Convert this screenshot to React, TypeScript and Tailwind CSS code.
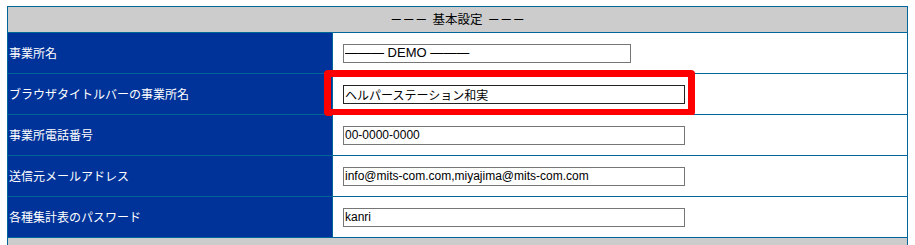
import React from "react";

const rows: { label: string; value: string; w: string; dark?: boolean; mark?: boolean; big?: boolean }[] = [
  { label: "事業所名", value: "――― DEMO ―――", w: "w-[288px]", big: true },
  { label: "ブラウザタイトルバーの事業所名", value: "ヘルパーステーション和実", w: "w-[342px]", dark: true, mark: true },
  { label: "事業所電話番号", value: "00-0000-0000", w: "w-[342px]" },
  { label: "送信元メールアドレス", value: "info@mits-com.com,miyajima@mits-com.com", w: "w-[342px]" },
  { label: "各種集計表のパスワード", value: "kanri", w: "w-[342px]" },
];

export default function App() {
  return (
    <div className="w-[915px] h-[245px] overflow-hidden bg-white pt-[6px] pl-[7px]">
      <div className="w-[901px] border border-[#006699] border-b-0">
        <div className="h-[26px] bg-[#cccccc] border-b border-[#006699] flex items-center justify-center gap-[5px] text-[12.5px] text-black font-['Noto_Sans_CJK_JP',sans-serif]">
          <span>－－－</span>
          <span>基本設定</span>
          <span>－－－</span>
        </div>
        {rows.map((r) => (
          <div key={r.label} className="flex h-[41px] border-b border-[#006699]">
            <div className="w-[324px] bg-[#003399] flex items-center pl-px text-white text-[12px] font-['Noto_Sans_CJK_JP',sans-serif]">
              {r.label}
            </div>
            <div className="relative flex-1 border-l border-[#006699] bg-white flex items-center pl-[10px]">
              <input
                readOnly
                defaultValue={r.value}
                className={`${r.w} h-[19px] border ${r.dark ? "border-[#222222]" : "border-[#767676]"} px-px ${r.big ? "text-[13px]" : "text-[12px]"} text-black outline-none font-['Liberation_Sans','Noto_Sans_CJK_JP',sans-serif]`}
              />
              {r.mark && (
                <div className="absolute left-[-9px] top-[-4px] w-[371px] h-[46px] border-[7px] border-[#ff0000] rounded-[4px] pointer-events-none" />
              )}
            </div>
          </div>
        ))}
        <div className="h-[26px] bg-[#cccccc]" />
      </div>
    </div>
  );
}
